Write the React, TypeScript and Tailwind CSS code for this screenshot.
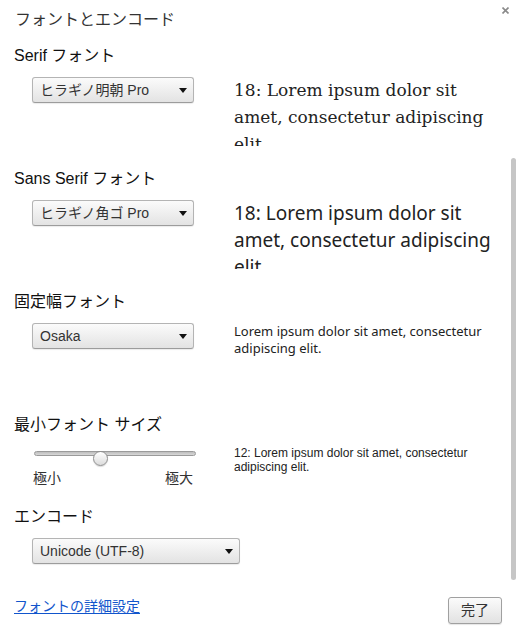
import { ReactNode } from 'react';

function Arrow() {
    return (
        <svg width="8" height="5" viewBox="0 0 8 5" className="shrink-0">
            <path d="M0 0 L8 0 L4 5 Z" fill="#111" />
        </svg>
    );
}

function Select({ value, width }: { value: string; width: string }) {
    return (
        <div
            className={`flex h-[26px] ${width} items-center justify-between rounded-[3px] border border-[#b4b4b4] border-b-[#9c9c9c] bg-linear-to-b from-[#fbfbfb] to-[#e3e3e3] pl-[7px] pr-[6px] text-[14px] text-[#333] shadow-[0_1px_1px_rgba(0,0,0,0.08)]`}
        >
            <span>{value}</span>
            <Arrow />
        </div>
    );
}

function Section({ label, children }: { label: string; children: ReactNode }) {
    return (
        <section className="mt-[23px] first:mt-0">
            <h2 className="h-[20px] text-[16px] leading-[20px] text-[#111]">{label}</h2>
            <div className="mt-[11px] flex items-start pl-[18px]">{children}</div>
        </section>
    );
}

const lorem = 'Lorem ipsum dolor sit amet, consectetur adipiscing elit.';

export default function App() {
    return (
        <div className="relative h-[629px] w-[517px] overflow-hidden bg-white font-['Liberation_Sans','Noto_Sans_CJK_JP',sans-serif]">
            {/* close */}
            <button className="absolute right-[7px] top-[6px] p-[1px]">
                <svg width="7" height="7" viewBox="0 0 7 7">
                    <path d="M0.5 0.5 L6.5 6.5 M6.5 0.5 L0.5 6.5" stroke="#8a8a8a" strokeWidth="1.6" />
                </svg>
            </button>

            {/* overlay scrollbar */}
            <div className="absolute right-[1px] top-[158px] h-[422px] w-[5px] rounded-[3px] bg-[#c6c6c6]" />

            <h1 className="ml-[15px] mt-[10px] h-[20px] text-[16px] leading-[20px] text-[#333]">フォントとエンコード</h1>

            <div className="mt-[16px] px-[14px]">
                <Section label="Serif フォント">
                    <div className="w-[202px] shrink-0">
                        <Select value="ヒラギノ明朝 Pro" width="w-[162px]" />
                    </div>
                    <p className="h-[69px] w-[262px] overflow-hidden font-['DejaVu_Serif',serif] text-[17px] leading-[27px] text-[#222]">
                        18: {lorem}
                    </p>
                </Section>

                <Section label="Sans Serif フォント">
                    <div className="w-[202px] shrink-0">
                        <Select value="ヒラギノ角ゴ Pro" width="w-[162px]" />
                    </div>
                    <p className="h-[69px] w-[262px] overflow-hidden font-['Noto_Sans',sans-serif] text-[19px] leading-[27px] text-[#222]">
                        18: {lorem}
                    </p>
                </Section>

                <Section label="固定幅フォント">
                    <div className="w-[202px] shrink-0">
                        <Select value="Osaka" width="w-[162px]" />
                    </div>
                    <p className="h-[69px] w-[262px] font-['Noto_Sans',sans-serif] text-[13px] leading-[17px] text-[#222]">{lorem}</p>
                </Section>

                <Section label="最小フォント サイズ">
                    <div className="h-[38px] w-[202px] shrink-0">
                        <div className="relative ml-[2px] mt-[1px] h-[15px] w-[162px]">
                            <div className="mt-[5px] h-[5px] rounded-full border border-[#9a9a9a] bg-linear-to-b from-[#bdbdbd] to-[#d8d8d8]" />
                            <div className="absolute left-[59px] top-0 h-[15px] w-[15px] rounded-full border border-[#8f8f8f] bg-linear-to-b from-[#ffffff] to-[#dcdcdc] shadow-[0_1px_1px_rgba(0,0,0,0.15)]" />
                        </div>
                        <div className="ml-[1px] mt-[4px] flex w-[160px] justify-between text-[14px] leading-[16px] text-[#333]">
                            <span>極小</span>
                            <span>極大</span>
                        </div>
                    </div>
                    <p className="w-[262px] text-[12px] leading-[14px] text-[#222]">12: {lorem}</p>
                </Section>

                <Section label="エンコード">
                    <Select value="Unicode (UTF-8)" width="w-[208px]" />
                </Section>

                <footer className="mt-[33px] flex items-start justify-between pr-[1px]">
                    <a href="#" className="pt-[1px] text-[14px] leading-[16px] text-[#1155cc] underline underline-offset-2">
                        フォントの詳細設定
                    </a>
                    <button className="flex h-[27px] w-[54px] items-center justify-center rounded-[3px] border border-[#a0a0a0] bg-linear-to-b from-[#fbfbfb] to-[#e2e2e2] text-[14px] text-[#333] shadow-[0_1px_1px_rgba(0,0,0,0.1)]">
                        完了
                    </button>
                </footer>
            </div>
        </div>
    );
}
